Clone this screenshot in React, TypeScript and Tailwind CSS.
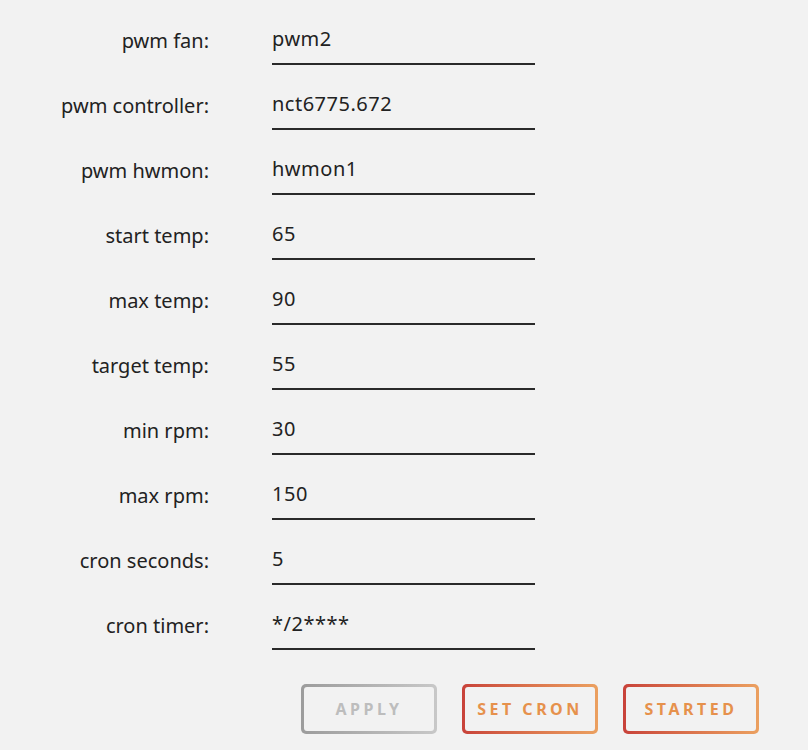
import React from 'react';

const fields: { label: string; value: string }[] = [
  { label: 'pwm fan:', value: 'pwm2' },
  { label: 'pwm controller:', value: 'nct6775.672' },
  { label: 'pwm hwmon:', value: 'hwmon1' },
  { label: 'start temp:', value: '65' },
  { label: 'max temp:', value: '90' },
  { label: 'target temp:', value: '55' },
  { label: 'min rpm:', value: '30' },
  { label: 'max rpm:', value: '150' },
  { label: 'cron seconds:', value: '5' },
  { label: 'cron timer:', value: '*/2****' },
];

function GradientButton({ label, disabled }: { label: string; disabled?: boolean }) {
  return (
    <div
      className={
        disabled
          ? 'rounded-[5px] p-[3px] bg-gradient-to-r from-[#9c9c9c] to-[#c8c8c8]'
          : 'rounded-[5px] p-[3px] bg-gradient-to-r from-[#c8423a] to-[#eba060]'
      }
    >
      <button
        className={
          'flex h-[44px] w-[130px] items-center justify-center rounded-[3px] bg-[#f2f2f2] text-[16px] font-bold tracking-[3.5px] ' +
          (disabled ? 'text-[#bdbdbd]' : 'text-[#e6914c]')
        }
      >
        {label}
      </button>
    </div>
  );
}

export default function App() {
  return (
    <div
      className="min-h-screen w-[808px] bg-[#f2f2f2] text-[#222]"
      style={{ fontFamily: '"Noto Sans", "Open Sans", sans-serif' }}
    >
      <div className="flex flex-col">
        {fields.map((f) => (
          <div key={f.label} className="flex h-[65px] items-end">
            <span className="w-[209px] pb-[10px] text-right text-[20px] leading-[28px]">{f.label}</span>
            <input
              readOnly
              value={f.value}
              className="ml-[63px] w-[263px] border-b-2 border-[#2a2a2a] bg-transparent pb-[10px] text-[20px] leading-[28px] tracking-[0.5px] outline-none"
            />
          </div>
        ))}
      </div>
      <div className="mt-[34px] flex gap-[25px] pl-[301px]">
        <GradientButton label="APPLY" disabled />
        <GradientButton label="SET CRON" />
        <GradientButton label="STARTED" />
      </div>
    </div>
  );
}
